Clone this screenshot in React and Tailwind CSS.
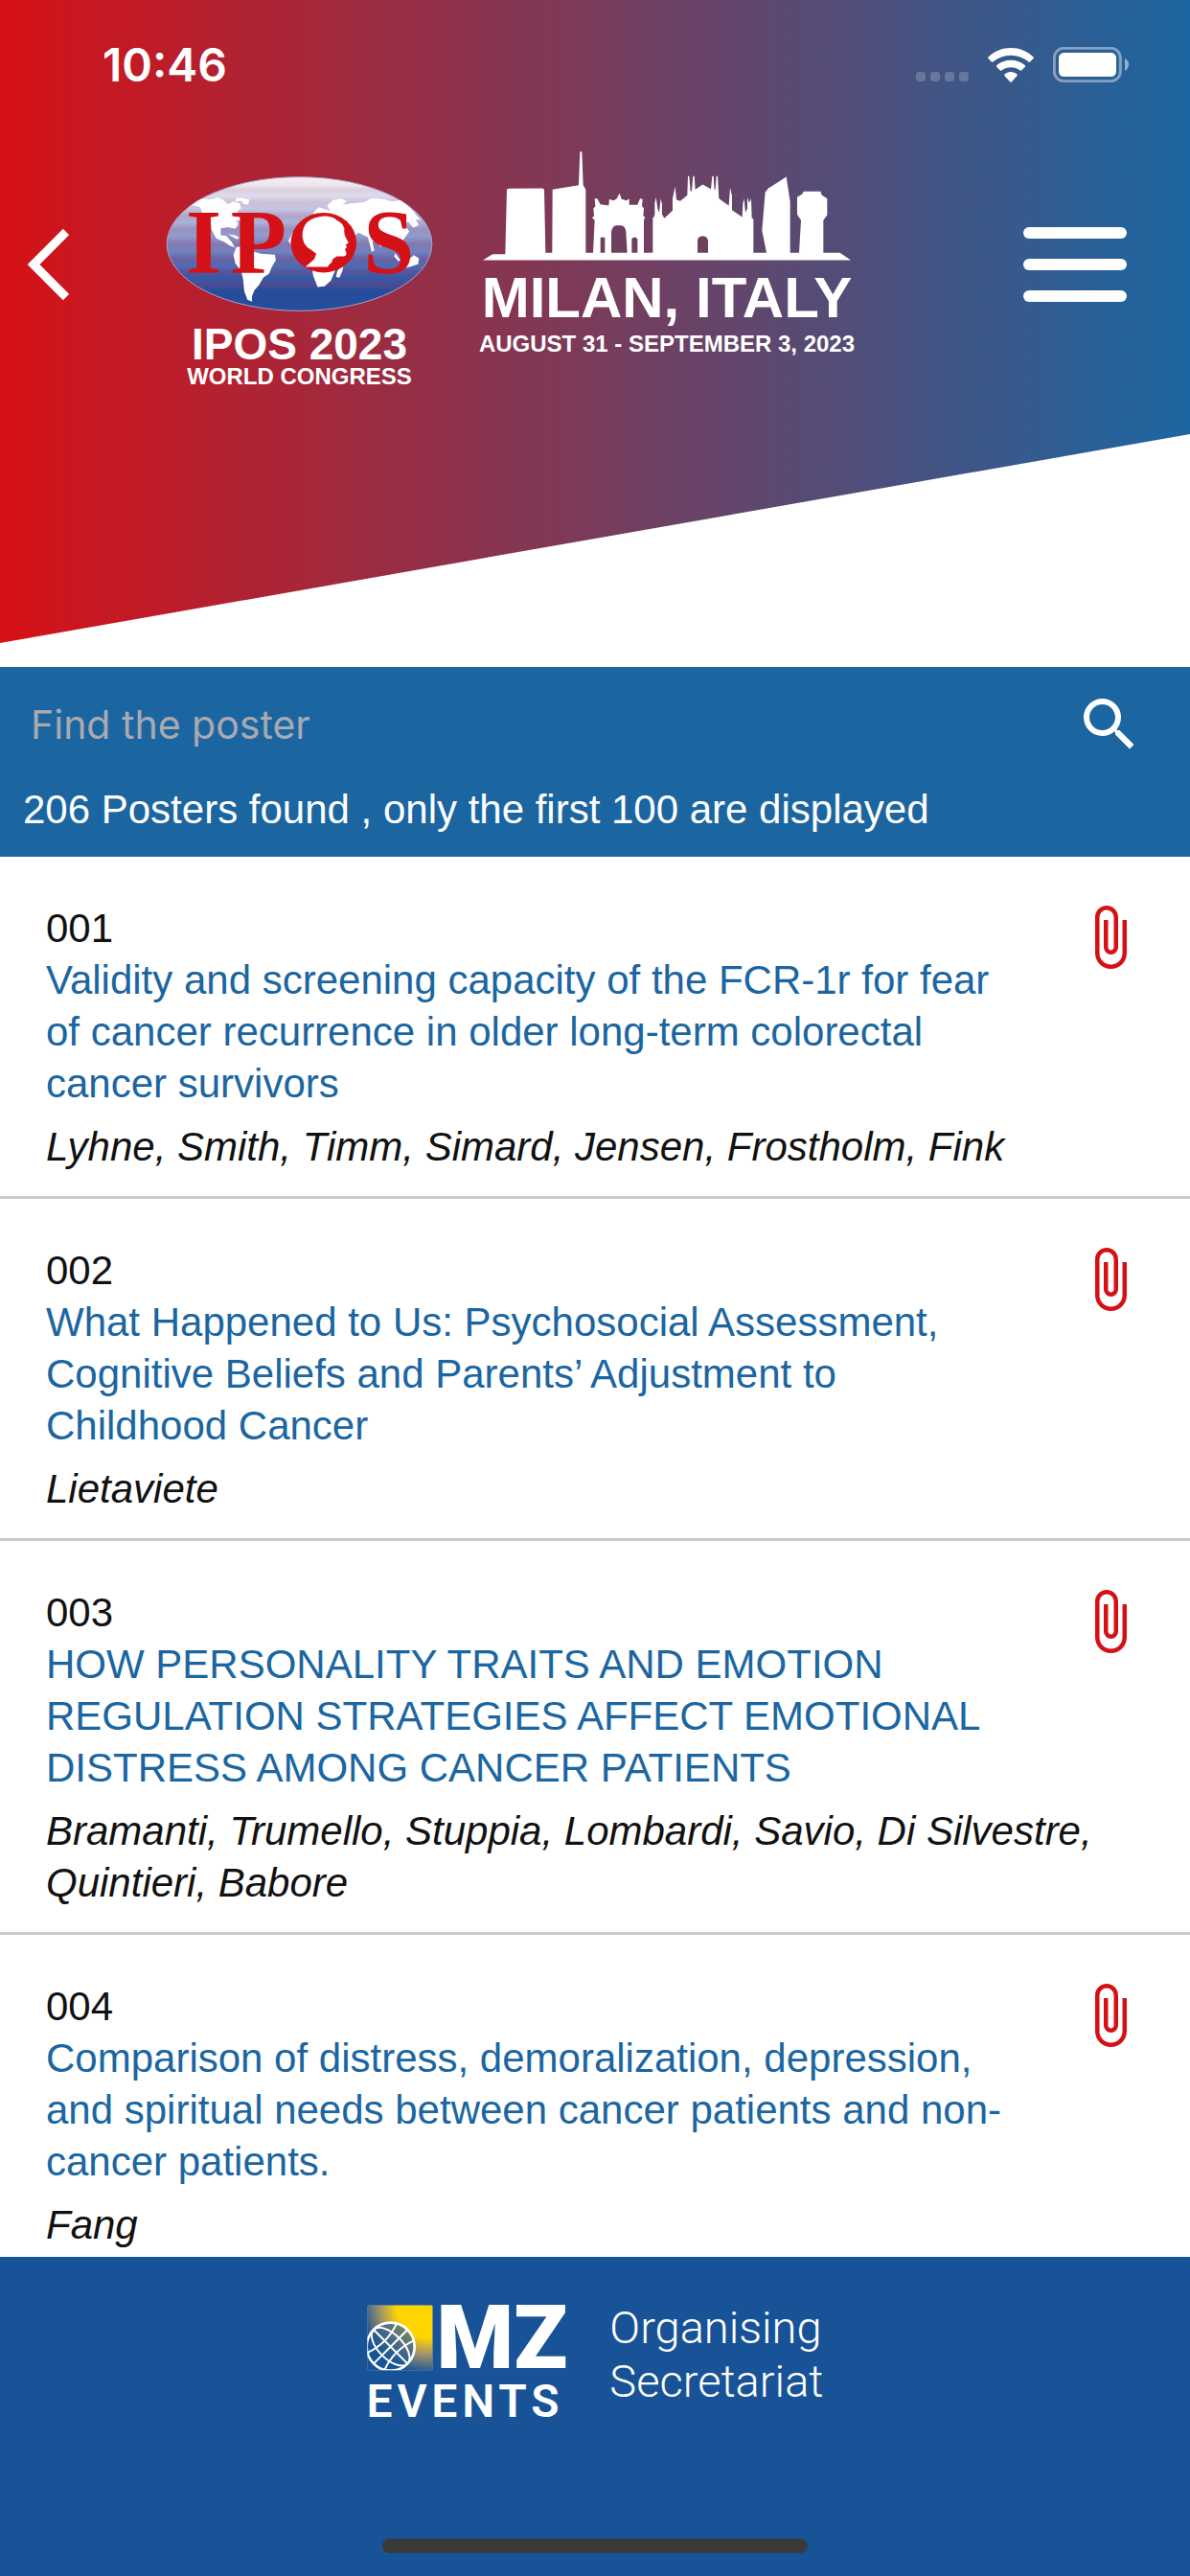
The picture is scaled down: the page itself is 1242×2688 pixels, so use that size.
import { useState } from "react";
import { MdAttachFile, MdSearch } from "react-icons/md";

const posters = [
  {
    id: "001",
    title: "Validity and screening capacity of the FCR-1r for fear of cancer recurrence in older long-term colorectal cancer survivors",
    authors: "Lyhne, Smith, Timm, Simard, Jensen, Frostholm, Fink",
  },
  {
    id: "002",
    title: "What Happened to Us: Psychosocial Assessment, Cognitive Beliefs and Parents’ Adjustment to Childhood Cancer",
    authors: "Lietaviete",
  },
  {
    id: "003",
    title: "HOW PERSONALITY TRAITS AND EMOTION REGULATION STRATEGIES AFFECT EMOTIONAL DISTRESS AMONG CANCER PATIENTS",
    authors: "Bramanti, Trumello, Stuppia, Lombardi, Savio, Di Silvestre, Quintieri, Babore",
  },
  {
    id: "004",
    title: "Comparison of distress, demoralization, depression, and spiritual needs between cancer patients and non-cancer patients.",
    authors: "Fang",
  },
];

function StatusBar() {
  return (
    <div className="flex h-[132px] items-start justify-between pt-10 pr-[63px] pl-[107px]">
      <span className="font-['Inter',sans-serif] text-[48px] leading-14 font-semibold">10:46</span>

      <div className="mt-[9px] flex items-end gap-5">
        <div className="mb-px flex gap-[5px]">
          <span className="size-2.5 rounded-[3px] bg-white/20" />
          <span className="size-2.5 rounded-[3px] bg-white/20" />
          <span className="size-2.5 rounded-[3px] bg-white/20" />
          <span className="size-2.5 rounded-[3px] bg-white/20" />
        </div>
        <svg className="h-9 w-12" viewBox="0 0 144 108" fill="white" aria-hidden="true">
          <path d="M72 0C99 0 123 10 142 28Q145 31 142 34L133 43Q130 46 127 43C111 30 93 23 72 23S33 30 17 43Q14 46 11 43L2 34Q-1 31 2 28C21 10 45 0 72 0Z" />
          <path d="M72 38C89 38 104 44 116 54Q119 57 116 60L106 70Q103 73 100 70C92 64 83 61 72 61S52 64 44 70Q41 73 38 70L28 60Q25 57 28 54C40 44 55 38 72 38Z" />
          <path d="M72 75C80 75 86 78 91 82Q93 85 91 88L75 106Q72 109 69 106L53 88Q51 85 53 82C58 78 64 75 72 75Z" />
        </svg>
        <svg className="h-[37px] w-20" viewBox="0 0 240 111" aria-hidden="true">
          <rect x="4" y="4" width="207" height="103" rx="30" fill="none" stroke="white" strokeOpacity="0.42" strokeWidth="9" />
          <rect x="18" y="18" width="180" height="75" rx="16" fill="white" />
          <path d="M225 36Q237 42 237 55T225 75Z" fill="white" fillOpacity="0.5" />
        </svg>
      </div>
    </div>
  );
}

function CongressLogo() {
  return (
    <div className="flex w-[279px] flex-col items-center pt-[26px]">
      <svg className="h-[141px] w-full" viewBox="69 99 836 424" role="img" aria-label="IPOS">
        <defs>
          <linearGradient id="globe" x1="0" y1="0" x2="0" y2="1">
            <stop offset="0" stopColor="#f4eef2" />
            <stop offset="0.06" stopColor="#eee6ee" />
            <stop offset="0.1" stopColor="#dccfdc" />
            <stop offset="0.14" stopColor="#dddcee" />
            <stop offset="0.19" stopColor="#cdbfd6" />
            <stop offset="0.24" stopColor="#c3c6e3" />
            <stop offset="0.29" stopColor="#b4a3c7" />
            <stop offset="0.34" stopColor="#aab2da" />
            <stop offset="0.39" stopColor="#9c90be" />
            <stop offset="0.44" stopColor="#8f9dce" />
            <stop offset="0.5" stopColor="#8579b1" />
            <stop offset="0.56" stopColor="#6f82c0" />
            <stop offset="0.61" stopColor="#6a62a4" />
            <stop offset="0.67" stopColor="#4d6cb3" />
            <stop offset="0.71" stopColor="#58549b" />
            <stop offset="0.76" stopColor="#315aa6" />
            <stop offset="0.8" stopColor="#504b92" />
            <stop offset="0.85" stopColor="#264d9b" />
            <stop offset="1" stopColor="#264d9b" />
          </linearGradient>
          <clipPath id="globeClip">
            <ellipse cx="487" cy="311" rx="416" ry="210" />
          </clipPath>
        </defs>
        <ellipse cx="487" cy="311" rx="416" ry="210" fill="url(#globe)" stroke="#a7a3c9" strokeWidth="3" />
        <g fill="white" clipPath="url(#globeClip)">
          <path d="M110 212L150 182 182 168 205 172 232 166 250 174 262 186 280 178 300 184 304 200 292 208 300 218 316 222 304 238 290 236 294 250 286 264 262 258 240 262 240 284 258 286 264 294 274 304 284 322 268 316 250 304 226 294 212 268 208 236 182 214 176 196 150 190Z" />
          <path d="M286 168L306 166 330 172 326 188 312 186 304 176 288 178ZM262 280L284 284 300 292 290 296Z" />
          <path d="M288 322L312 316 340 334 366 342 410 345 413 362 400 384 392 404 374 416 360 440 346 456 338 476 338 492 324 486 314 460 310 420 304 396 286 372 280 346Z" />
          <path d="M452 302L466 276 492 250 530 240 532 212 548 196 566 202 584 208 574 190 592 174 618 168 636 178 622 188 650 184 690 180 712 168 746 170 780 178 810 172 840 204 868 236 852 234 862 252 844 260 828 240 816 250 832 272 812 300 788 306 776 296 750 300 742 322 730 296 716 304 722 332 714 336 702 290 672 276 646 300 640 342 600 392 586 426 566 444 544 446 530 410 520 340 470 326Z" />
          <path d="M606 396L626 374 622 396 612 418 602 414ZM788 340L804 362 798 366 784 350ZM812 372L830 360 846 346 862 356 860 374 838 382 822 386Z" />
        </g>
        <g fill="#d41117" fontFamily="'Liberation Serif', serif" fontWeight="700" fontSize="287">
          <text x="131" y="404">I</text>
          <text x="271" y="404">P</text>
          <text x="688" y="404">S</text>
        </g>
        <ellipse cx="563" cy="307" rx="103" ry="94" fill="#d41117" />
        <path
          fill="white"
          d="M506 383H576Q580 374 588 370L592 358 604 350H622Q636 352 634 338L630 328 636 320 632 314 641 308 632 290Q626 280 628 262 622 244 606 238 592 224 566 224 530 226 510 244 494 264 497 292 502 320 524 330L540 342 534 358Z"
        />
      </svg>
      <p className="mt-3 text-[46px] leading-11 font-bold whitespace-nowrap">IPOS 2023</p>
      <p className="text-2xl leading-6 font-bold whitespace-nowrap">WORLD CONGRESS</p>
    </div>
  );
}

function MilanLogo() {
  return (
    <div className="flex w-[392px] flex-col items-center">
      <svg className="h-[115px] w-[384px]" viewBox="72 53 1152 344" fill="white" aria-hidden="true">
        <path d="M72 393L102 374H142L147 172Q150 168 158 169L258 168 264 172 268 370H289L290 172 372 158 376 53H382L386 158 394 172V370H417L422 268 414 260 420 254 418 230 424 226 422 200 430 200 440 218 466 222 468 202 480 206 490 202 500 184 506 202 522 206 530 200 530 220 556 220 564 200 572 202 570 224 576 230 574 254 580 258 576 268V370H604V262L610 252V214L614 196 619 232 624 244 629 200 633 218V250L640 262 666 238V200L674 162 678 204 690 208 712 190 714 130H718L722 178 726 176 730 130H734L737 172 760 156 786 170 790 130H794L797 172H800L803 130H807L811 200 842 222 846 166 852 192V236L884 258 886 216 890 200 894 244 900 232V196L906 214 912 200 914 260 919 264V370H960L946 300 956 180 966 168 1022 132 1034 210V370H1062L1068 268 1056 250V196L1072 186 1076 178H1130L1132 188 1150 200V252L1138 268V370H1190L1224 393Z" />
        <g fill="#6f3f60">
          <path d="M474 370V304Q478 284 490 284H506Q518 286 520 304L524 370ZM440 370V322H454V370ZM538 370V326Q547 316 556 326V370Z" />
          <path d="M744 370V330Q746 318 760 317 776 318 777 332V370Z" />
        </g>
      </svg>
      <p className="mt-2 text-[60px] leading-15 font-bold whitespace-nowrap">MILAN, ITALY</p>
      <p className="mt-1 text-2xl leading-7 font-bold whitespace-nowrap">AUGUST 31 - SEPTEMBER 3, 2023</p>
    </div>
  );
}

function Header() {
  return (
    <header className="h-[696px] shrink-0 text-white">
      <div className="h-full bg-linear-to-r/srgb from-[#d61116] to-[#1b66a1] [clip-path:polygon(0_0,100%_0,100%_453px,0_671px)]">
        <StatusBar />

        <nav className="flex items-start pt-[26px] pr-[66px] pl-7">
          <button type="button" aria-label="Back" className="mt-20 mr-[101px]">
            <svg className="h-[76px] w-11" viewBox="28 238 44 76" fill="none" stroke="white" strokeWidth="9" aria-hidden="true">
              <path d="M69 242L35 276 69 310" />
            </svg>
          </button>

          <div className="flex gap-12">
            <CongressLogo />
            <MilanLogo />
          </div>

          <button type="button" aria-label="Menu" className="mt-[79px] ml-auto flex w-[108px] flex-col gap-[21px]">
            <span className="h-3 rounded-full bg-white" />
            <span className="h-3 rounded-full bg-white" />
            <span className="h-3 rounded-full bg-white" />
          </button>
        </nav>
      </div>
    </header>
  );
}

function PosterItem({ poster }) {
  return (
    <li className="border-b-3 border-[#cacaca] px-12 pt-12 pb-6">
      <div className="flex items-start gap-14">
        <div className="flex-1">
          <p>{poster.id}</p>
          <a href={`#${poster.id}`} className="block text-[#1b66a1]">
            {poster.title}
          </a>
        </div>
        <MdAttachFile className="size-18 text-[#d61116]" />
      </div>
      <p className="mt-3 italic">{poster.authors}</p>
    </li>
  );
}

function Footer() {
  return (
    <footer className="flex h-[333px] shrink-0 flex-col items-center justify-between bg-[#185397] pt-[46px] pb-6 font-['Roboto',sans-serif] text-white">
      <div className="flex gap-11">
        <div className="pt-1">
          <div className="flex items-start gap-1">
            <svg className="size-[69px]" viewBox="69 75 207 207" aria-hidden="true">
              <defs>
                <radialGradient id="sun" cx="0.95" cy="0" r="1.05">
                  <stop offset="0.48" stopColor="#ffd500" />
                  <stop offset="0.72" stopColor="#a19568" />
                  <stop offset="1" stopColor="#185397" />
                </radialGradient>
                <clipPath id="square">
                  <rect x="70" y="76" width="205" height="204" rx="6" />
                </clipPath>
              </defs>
              <rect x="70" y="76" width="205" height="204" rx="6" fill="url(#sun)" stroke="#5d7fae" strokeWidth="2" />
              <g clipPath="url(#square)" fill="none" stroke="white" strokeWidth="6">
                <circle cx="143" cy="206" r="75" fill="#185397" fillOpacity="0.6" strokeWidth="8" />
                <g transform="rotate(-45 143 206)">
                  <path d="M143 131V281M68 206H218" />
                  <ellipse cx="143" cy="206" rx="38" ry="75" />
                  <path d="M78 168Q143 192 208 168M78 244Q143 220 208 244" />
                </g>
              </g>
            </svg>
            <span className="text-[92px] leading-[69px] font-black">MZ</span>
          </div>
          <p className="mt-2 text-[48px] leading-12 font-semibold tracking-widest">EVENTS</p>
        </div>
        <p className="text-[47px] leading-14 font-light">
          Organising
          <br />
          Secretariat
        </p>
      </div>
      <div className="h-[15px] w-[444px] rounded-full bg-[#3a3a3a]" />
    </footer>
  );
}

function App() {
  const [query, setQuery] = useState("");

  return (
    <div className="flex h-screen flex-col bg-white font-['Liberation_Sans',sans-serif] text-[42px] leading-[54px] text-[#111]">
      <Header />

      <section className="shrink-0 bg-[#1b66a1] pt-6 pb-[22px] text-white">
        <form className="flex items-center pr-12 pl-8" onSubmit={(event) => event.preventDefault()}>
          <input
            type="search"
            aria-label="Find the poster"
            placeholder="Find the poster"
            value={query}
            onChange={(event) => setQuery(event.target.value)}
            className="h-18 min-w-0 flex-1 bg-transparent font-['Inter',sans-serif] text-[41px] outline-none placeholder:text-[#a9a9b0]"
          />
          <button type="submit" aria-label="Search">
            <MdSearch className="size-18" />
          </button>
        </form>
        <p className="mt-[26px] px-6">206 Posters found , only the first 100 are displayed</p>
      </section>

      <main className="min-h-0 flex-1 overflow-y-auto [scrollbar-width:none]">
        <ul>
          {posters.map((poster) => (
            <PosterItem key={poster.id} poster={poster} />
          ))}
        </ul>
      </main>

      <Footer />
    </div>
  );
}

export default App;
